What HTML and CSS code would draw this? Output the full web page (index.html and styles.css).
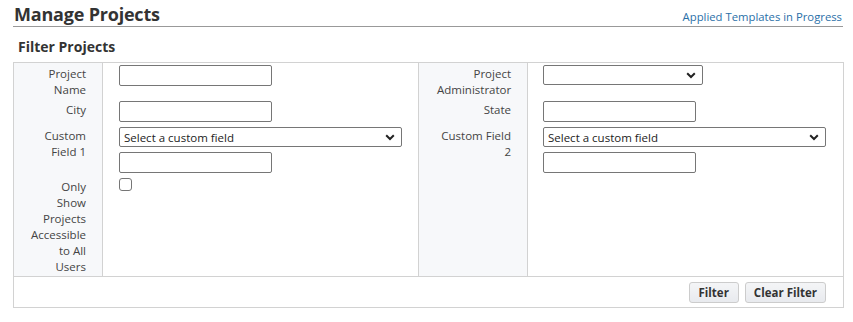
FILE: index.html
```html
<!DOCTYPE html>
<html>
<head>
<meta charset="utf-8">
<link rel="stylesheet" href="styles.css">
</head>
<body>
<div class="page">
  <div class="header">
    <h1 class="title">Manage Projects</h1>
    <a class="link" href="#">Applied Templates in Progress</a>
  </div>
  <h2 class="subtitle">Filter Projects</h2>
  <div class="filter">
    <div class="grid">
      <div class="lbl l1">Project Name</div>
      <div class="fld f1"><input class="txt" type="text"></div>
      <div class="lbl l2">Project Administrator</div>
      <div class="fld f2">
        <div class="sel sel-short"><span class="sel-text"></span>
          <svg class="chev" width="10" height="7" viewBox="0 0 10 7"><path d="M1.2 1.3 L5 5 L8.8 1.3" fill="none" stroke="#222" stroke-width="2"/></svg>
        </div>
      </div>

      <div class="lbl l1">City</div>
      <div class="fld f1"><input class="txt" type="text"></div>
      <div class="lbl l2">State</div>
      <div class="fld f2"><input class="txt" type="text"></div>

      <div class="lbl l1">Custom Field 1</div>
      <div class="fld f1">
        <div class="sel sel-long"><span class="sel-text">Select a custom field</span>
          <svg class="chev" width="10" height="7" viewBox="0 0 10 7"><path d="M1.2 1.3 L5 5 L8.8 1.3" fill="none" stroke="#222" stroke-width="2"/></svg>
        </div>
        <input class="txt" type="text">
      </div>
      <div class="lbl l2">Custom Field 2</div>
      <div class="fld f2">
        <div class="sel sel-long"><span class="sel-text">Select a custom field</span>
          <svg class="chev" width="10" height="7" viewBox="0 0 10 7"><path d="M1.2 1.3 L5 5 L8.8 1.3" fill="none" stroke="#222" stroke-width="2"/></svg>
        </div>
        <input class="txt" type="text">
      </div>

      <div class="lbl l1 last">Only Show Projects Accessible to All Users</div>
      <div class="fld f1 last"><span class="chk"></span></div>
      <div class="lbl l2 last"></div>
      <div class="fld f2 last"></div>
    </div>
    <div class="footer">
      <button class="btn btn-filter" type="button">Filter</button>
      <button class="btn" type="button">Clear Filter</button>
    </div>
  </div>
</div>
</body>
</html>
```
FILE: styles.css
```css
* { box-sizing: border-box; }
html, body { margin: 0; padding: 0; background: #fff; }
body {
  font-family: "Open Sans", "Noto Sans", "Liberation Sans", sans-serif;
  color: #444;
  font-size: 12px;
}
.page { padding: 0 10px 0 13px; width: 853px; }
.header {
  display: flex;
  justify-content: space-between;
  align-items: flex-end;
  border-bottom: 1px solid #999;
  height: 27px;
  padding-left: 1px;
}
.title {
  margin: 0;
  font-size: 18px;
  font-weight: 700;
  color: #333;
  line-height: 24px;
  letter-spacing: -0.2px;
}
.link {
  font-size: 11.3px;
  color: #2a6fa8;
  text-decoration: none;
  line-height: 16px;
  padding-bottom: 1px;
  margin-right: 1px;
}
.subtitle {
  margin: 0;
  padding: 10px 0 0 5px;
  height: 35px;
  font-size: 14px;
  font-weight: 700;
  color: #333;
  line-height: 20px;
}
.filter { border: 1px solid #d2d2d2; width: 831px; }
.grid {
  display: grid;
  grid-template-columns: 89px 316px 109px 315px;
}
.lbl {
  background: #f7f8fa;
  text-align: right;
  line-height: 16px;
  font-size: 11.5px;
  color: #444;
  border-right: 1px solid #d2d2d2;
}
.l1 { padding: 3px 16px 1px 17px; }
.l2 { padding: 3px 16px 1px 18px; }
.fld { padding: 2px 0 3px 16px; border-right: 1px solid #d2d2d2; display: flex; flex-direction: column; align-items: flex-start; gap: 5px; }
.f2 { border-right: none; padding-left: 15px; }
.txt {
  width: 153px;
  height: 21px;
  border: 1px solid #767676;
  border-radius: 2px;
  margin: 0;
  padding: 0 4px;
  font: inherit;
}
.sel {
  position: relative;
  height: 20px;
  border: 1px solid #767676;
  border-radius: 2px;
  background: #fff;
  font-size: 11.5px;
  color: #222;
  line-height: 19px;
  padding-left: 4px;
}
.sel-short { width: 160px; height: 20px; }
.sel-long { width: 283px; }
.chev { position: absolute; right: 6px; top: 6px; }
.chk {
  display: block;
  width: 13px;
  height: 13px;
  border: 1px solid #767676;
  border-radius: 3px;
  margin-top: 0;
}
.footer {
  border-top: 1px solid #d2d2d2;
  height: 31px;
  display: flex;
  justify-content: flex-end;
  align-items: center;
  gap: 6px;
  padding-right: 17px;
}
.btn {
  height: 21px;
  margin: 0;
  padding: 0 8px;
  border: 1px solid #ccc;
  border-radius: 3px;
  background: linear-gradient(#f4f5f7, #e8eaee);
  font-family: inherit;
  font-size: 11.5px;
  font-weight: 700;
  color: #333;
  line-height: 19px;
}
.btn-filter { padding: 0 9px; }
```
